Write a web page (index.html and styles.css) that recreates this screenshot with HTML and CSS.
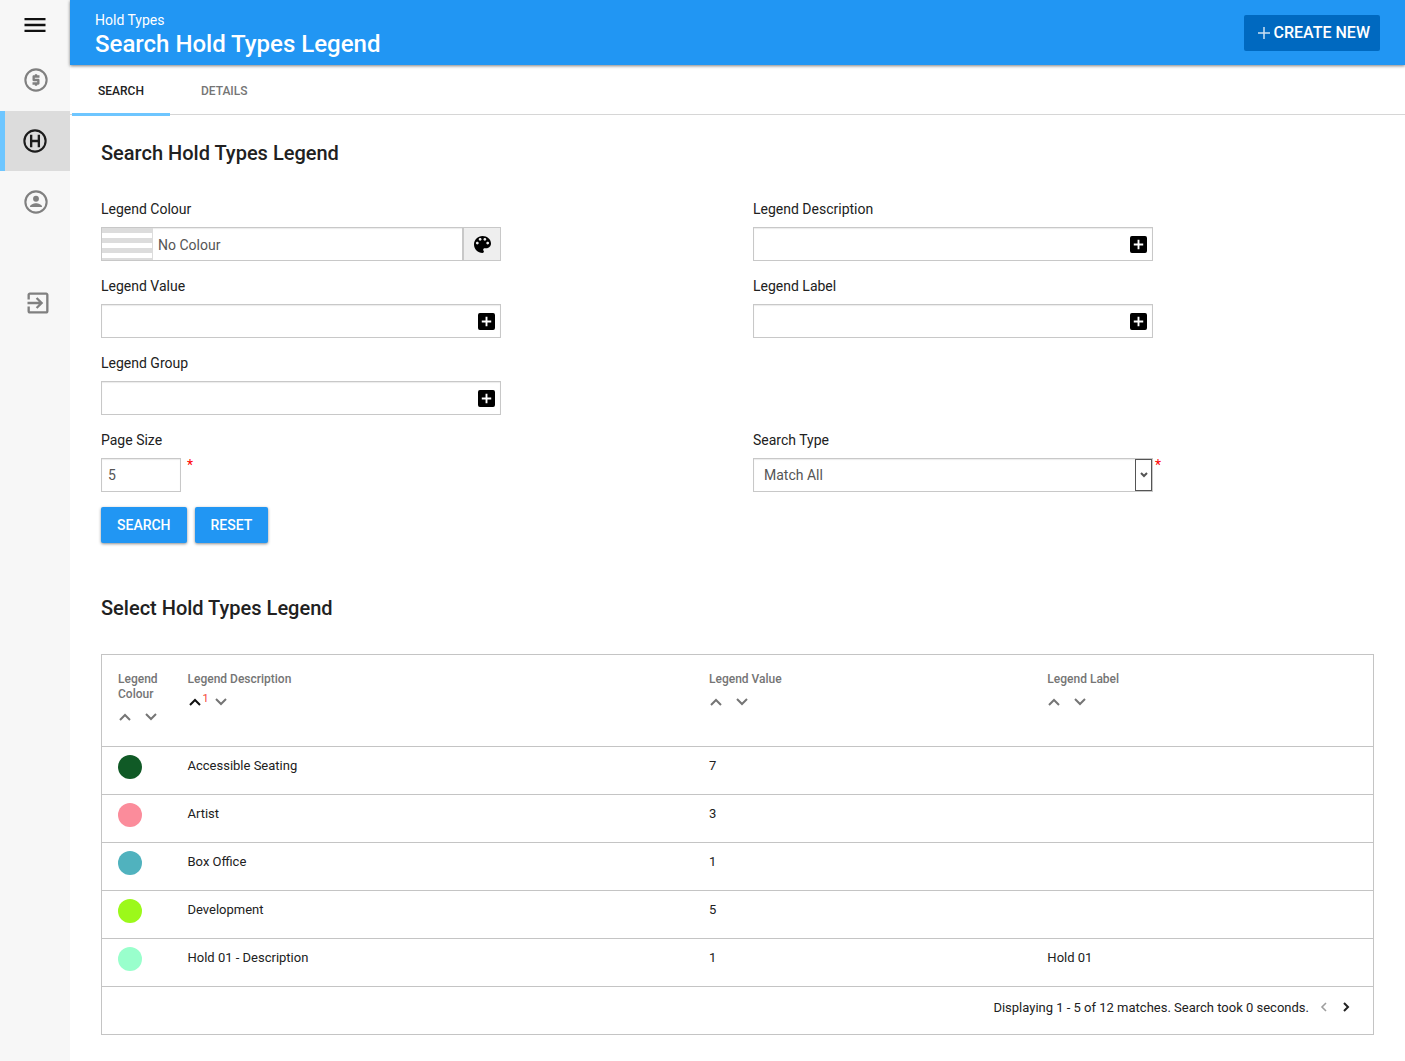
FILE: index.html
```html
<!DOCTYPE html>
<html lang="en">
<head>
<meta charset="utf-8">
<meta name="viewport" content="width=device-width, initial-scale=1">
<title>Search Hold Types Legend</title>
<link rel="stylesheet" href="styles.css">
</head>
<body>
<svg class="sprite" aria-hidden="true">
  <symbol id="chevron-up" viewBox="0 0 12 8"><path d="M1 7l5-5 5 5" fill="none" stroke="currentColor" stroke-width="2"/></symbol>
  <symbol id="chevron-down" viewBox="0 0 12 8"><path d="M1 1l5 5 5-5" fill="none" stroke="currentColor" stroke-width="2"/></symbol>
  <symbol id="chevron-small" viewBox="0 0 8 6"><path d="M1 1l3 3 3-3" fill="none" stroke="currentColor" stroke-width="2"/></symbol>
  <symbol id="add-box" viewBox="3 3 18 18"><path fill="currentColor" d="M19 3H5a2 2 0 0 0-2 2v14a2 2 0 0 0 2 2h14a2 2 0 0 0 2-2V5a2 2 0 0 0-2-2zm-2 10h-4v4h-2v-4H7v-2h4V7h2v4h4v2z"/></symbol>
</svg>

<nav class="sidebar" aria-label="Main">
  <button class="menu-button" type="button" aria-label="Menu">
    <svg class="nav-icon" viewBox="0 0 24 24"><path fill="currentColor" d="M3 18h18v-2H3v2zm0-5h18v-2H3v2zm0-7v2h18V6H3z"/></svg>
  </button>
  <a class="nav-item" href="#prices" aria-label="Prices">
    <svg class="nav-icon" viewBox="0 0 24 24"><circle cx="12" cy="12" r="9.1" fill="none" stroke="currentColor" stroke-width="1.8"/><path fill="currentColor" d="M11 17h2v-1h1c.55 0 1-.45 1-1v-3c0-.55-.45-1-1-1h-3v-1h4V8h-2V7h-2v1h-1c-.55 0-1 .45-1 1v3c0 .55.45 1 1 1h3v1H9v2h2v1z"/></svg>
  </a>
  <a class="nav-item nav-item-active" href="#holds" aria-label="Hold types">
    <svg class="nav-icon" viewBox="0 0 24 24"><circle cx="12" cy="12" r="9.1" fill="none" stroke="currentColor" stroke-width="1.8"/><path d="M8.700 6.700v10.600M15.300 6.700v10.600M8.700 12h6.600" fill="none" stroke="currentColor" stroke-width="2"/></svg>
  </a>
  <a class="nav-item" href="#account" aria-label="Account">
    <svg class="nav-icon" viewBox="0 0 24 24"><circle cx="12" cy="12" r="9.1" fill="none" stroke="currentColor" stroke-width="1.8"/><circle cx="12" cy="9.2" r="2.5" fill="currentColor"/><path fill="currentColor" d="M6.800 16.200c0-2 3.400-3.100 5.200-3.100s5.200 1.100 5.200 3.100z"/></svg>
  </a>
  <a class="nav-item nav-item-exit" href="#exit" aria-label="Log out">
    <svg class="nav-icon" viewBox="0 0 24 24"><path fill="currentColor" d="M10.090 15.590L11.500 17l5-5-5-5-1.410 1.410L12.670 11H3v2h9.670l-2.580 2.590zM19 3H5c-1.110 0-2 .9-2 2v4h2V5h14v14H5v-4H3v4c0 1.100.89 2 2 2h14c1.100 0 2-.9 2-2V5c0-1.100-.9-2-2-2z"/></svg>
  </a>
</nav>

<div class="page">
  <header class="topbar">
    <div class="topbar-text">
      <div class="topbar-section">Hold Types</div>
      <h1 class="topbar-title">Search Hold Types Legend</h1>
    </div>
    <button class="create-button" type="button">
      <svg class="create-icon" viewBox="0 0 12 12"><path d="M6 0v12M0 6h12" stroke="currentColor" stroke-width="1.500"/></svg>
      CREATE NEW
    </button>
  </header>

  <nav class="tabs" aria-label="Views">
    <a class="tab tab-active" href="#search" aria-current="page">SEARCH</a>
    <a class="tab" href="#details">DETAILS</a>
  </nav>

  <main class="content">
    <h2 class="section-title">Search Hold Types Legend</h2>
    <form class="search-form">
      <div class="fields">
        <div class="field">
          <label class="field-label" for="colour">Legend Colour</label>
          <div class="control">
            <span class="swatch-none"></span>
            <input class="control-input colour-input" id="colour" type="text" value="No Colour" readonly>
            <button class="palette-button" type="button" aria-label="Pick a colour">
              <svg class="palette-icon" viewBox="3 3 18 18"><path fill="currentColor" d="M12 3c-4.970 0-9 4.030-9 9s4.030 9 9 9c.83 0 1.500-.67 1.500-1.500 0-.39-.15-.74-.39-1.010-.23-.26-.38-.61-.38-.99 0-.83.67-1.500 1.500-1.500H16c2.760 0 5-2.240 5-5 0-4.420-4.030-8-9-8zm-5.500 9c-.83 0-1.500-.67-1.500-1.500S5.670 9 6.500 9 8 9.670 8 10.500 7.330 12 6.500 12zm3-4C8.670 8 8 7.330 8 6.500S8.670 5 9.500 5s1.500.67 1.500 1.500S10.330 8 9.500 8zm5 0c-.83 0-1.500-.67-1.500-1.500S13.670 5 14.500 5s1.500.67 1.500 1.500S15.330 8 14.500 8zm3 4c-.83 0-1.500-.67-1.500-1.500S16.670 9 17.500 9s1.500.67 1.500 1.500-.67 1.500-1.500 1.500z"/></svg>
            </button>
          </div>
        </div>
        <div class="field">
          <label class="field-label" for="description">Legend Description</label>
          <div class="control">
            <input class="control-input" id="description" type="text">
            <button class="add-button" type="button" aria-label="Add description"><svg class="add-icon"><use href="#add-box"/></svg></button>
          </div>
        </div>
        <div class="field">
          <label class="field-label" for="value">Legend Value</label>
          <div class="control">
            <input class="control-input" id="value" type="text">
            <button class="add-button" type="button" aria-label="Add value"><svg class="add-icon"><use href="#add-box"/></svg></button>
          </div>
        </div>
        <div class="field">
          <label class="field-label" for="label">Legend Label</label>
          <div class="control">
            <input class="control-input" id="label" type="text">
            <button class="add-button" type="button" aria-label="Add label"><svg class="add-icon"><use href="#add-box"/></svg></button>
          </div>
        </div>
        <div class="field field-first">
          <label class="field-label" for="group">Legend Group</label>
          <div class="control">
            <input class="control-input" id="group" type="text">
            <button class="add-button" type="button" aria-label="Add group"><svg class="add-icon"><use href="#add-box"/></svg></button>
          </div>
        </div>
        <div class="field field-first">
          <label class="field-label" for="page-size">Page Size</label>
          <div class="required-row">
            <div class="control control-small">
              <input class="control-input" id="page-size" type="text" value="5" required>
            </div>
            <span class="required">*</span>
          </div>
        </div>
        <div class="field">
          <label class="field-label" for="search-type">Search Type</label>
          <div class="required-row required-row-tight">
            <div class="control">
              <select class="control-select" id="search-type" required>
                <option>Match All</option>
                <option>Match Any</option>
              </select>
              <span class="select-arrow"><svg class="select-icon"><use href="#chevron-small"/></svg></span>
            </div>
            <span class="required">*</span>
          </div>
        </div>
      </div>
      <div class="actions">
        <button class="action-button" type="submit">SEARCH</button>
        <button class="action-button" type="reset">RESET</button>
      </div>
    </form>

    <h2 class="section-title">Select Hold Types Legend</h2>
    <table class="results">
      <colgroup><col class="col-colour"><col class="col-description"><col class="col-value"><col></colgroup>
      <thead>
        <tr>
          <th scope="col">Legend Colour
            <div class="sort">
              <button class="sort-button" type="button" aria-label="Sort by colour ascending"><svg class="sort-icon"><use href="#chevron-up"/></svg></button>
              <span class="sort-order"></span>
              <button class="sort-button" type="button" aria-label="Sort by colour descending"><svg class="sort-icon"><use href="#chevron-down"/></svg></button>
            </div>
          </th>
          <th scope="col" aria-sort="ascending">Legend Description
            <div class="sort">
              <button class="sort-button sort-button-active" type="button" aria-label="Sort by description ascending"><svg class="sort-icon"><use href="#chevron-up"/></svg></button>
              <span class="sort-order">1</span>
              <button class="sort-button" type="button" aria-label="Sort by description descending"><svg class="sort-icon"><use href="#chevron-down"/></svg></button>
            </div>
          </th>
          <th scope="col">Legend Value
            <div class="sort">
              <button class="sort-button" type="button" aria-label="Sort by value ascending"><svg class="sort-icon"><use href="#chevron-up"/></svg></button>
              <span class="sort-order"></span>
              <button class="sort-button" type="button" aria-label="Sort by value descending"><svg class="sort-icon"><use href="#chevron-down"/></svg></button>
            </div>
          </th>
          <th scope="col">Legend Label
            <div class="sort">
              <button class="sort-button" type="button" aria-label="Sort by label ascending"><svg class="sort-icon"><use href="#chevron-up"/></svg></button>
              <span class="sort-order"></span>
              <button class="sort-button" type="button" aria-label="Sort by label descending"><svg class="sort-icon"><use href="#chevron-down"/></svg></button>
            </div>
          </th>
        </tr>
      </thead>
      <tbody>
        <tr><td><span class="dot dot-green"></span></td><td>Accessible Seating</td><td>7</td><td></td></tr>
        <tr><td><span class="dot dot-pink"></span></td><td>Artist</td><td>3</td><td></td></tr>
        <tr><td><span class="dot dot-teal"></span></td><td>Box Office</td><td>1</td><td></td></tr>
        <tr><td><span class="dot dot-lime"></span></td><td>Development</td><td>5</td><td></td></tr>
        <tr><td><span class="dot dot-mint"></span></td><td>Hold 01 - Description</td><td>1</td><td>Hold 01</td></tr>
      </tbody>
      <tfoot>
        <tr>
          <td colspan="4">
            <div class="pager">
              <span class="pager-text">Displaying 1 - 5 of 12 matches. Search took 0 seconds.</span>
              <button class="pager-button" type="button" aria-label="Previous page" disabled><svg class="pager-icon" viewBox="0 0 8 10"><path d="M6 1L2 5l4 4" fill="none" stroke="currentColor" stroke-width="1.600"/></svg></button>
              <button class="pager-button" type="button" aria-label="Next page"><svg class="pager-icon" viewBox="0 0 8 10"><path d="M2 1l4 4-4 4" fill="none" stroke="currentColor" stroke-width="2"/></svg></button>
            </div>
          </td>
        </tr>
      </tfoot>
    </table>
  </main>
</div>
</body>
</html>
```
FILE: styles.css
```css
* {
  box-sizing: border-box;
}

body {
  display: flex;
  min-height: 100vh;
  margin: 0;
  background: #fff;
  color: #212121;
  font: 14px/20px Roboto, "Liberation Sans", sans-serif;
}

button,
input,
select {
  margin: 0;
  padding: 0;
  border: 0;
  background: none;
  color: inherit;
  font: inherit;
}

svg {
  display: block;
}

a {
  color: inherit;
  text-decoration: none;
}

.sprite {
  position: absolute;
  width: 0;
  height: 0;
}

/* Sidebar */
.sidebar {
  display: flex;
  flex: none;
  flex-direction: column;
  gap: 1px;
  width: 70px;
  background: #f7f7f7;
  color: #808080;
}

.menu-button {
  display: flex;
  align-items: center;
  justify-content: center;
  height: 49px;
  color: #111;
}

.nav-item {
  display: flex;
  align-items: center;
  height: 60px;
  padding-left: 22px;
}

.nav-item-active {
  padding-left: 16px;
  border-left: 5px solid #6ec6ff;
  background: #dcdcdc;
  color: #1c1c1c;
}

.nav-item-exit {
  margin-top: 40px;
  padding-left: 24px;
}

.nav-icon {
  width: 28px;
  height: 28px;
}

/* Header and tabs */
.page {
  flex: 1;
  min-width: 0;
}

.topbar {
  display: flex;
  align-items: center;
  justify-content: space-between;
  height: 65px;
  padding: 0 25px;
  background: #2196f3;
  box-shadow: 0 1px 3px rgba(0, 0, 0, 0.5);
  color: #fff;
}

.topbar-text {
  padding-top: 2px;
}

.topbar-title {
  margin: 0;
  font-size: 24px;
  font-weight: 500;
  line-height: 28px;
}

.create-button {
  display: flex;
  align-items: center;
  gap: 4px;
  height: 36px;
  padding: 1px 10px 0 14px;
  border-radius: 2px;
  background: #0069c0;
  font-size: 16px;
  font-weight: 500;
}

.create-icon {
  width: 12px;
  height: 12px;
  opacity: 0.8;
}

.tabs {
  display: flex;
  gap: 5px;
  height: 50px;
  padding-left: 2px;
  box-shadow: inset 0 -1px #d6d6d6;
  color: #757575;
  font-size: 12px;
  font-weight: 500;
}

.tab {
  padding: 16px 26px 0;
}

.tab-active {
  margin-bottom: -1px;
  border-bottom: 3px solid #6ec6ff;
  color: #212121;
}

/* Search form */
.content {
  padding: 26px 0 26px 31px;
}

.section-title {
  margin: 0 0 34px;
  font-size: 20px;
  font-weight: 500;
  line-height: 24px;
}

.fields {
  display: grid;
  grid-template-columns: 1fr 1fr;
  row-gap: 15px;
}

.field {
  max-width: 400px;
}

.field-first {
  grid-column: 1;
}

.field-label {
  display: block;
  margin-bottom: 8px;
}

.control {
  display: flex;
  flex: none;
  align-items: center;
  width: 100%;
  height: 34px;
  border: 1px solid #c8c8c8;
  box-shadow: inset 0 1px 1px rgba(0, 0, 0, 0.08);
  color: #555;
}

.control-small {
  width: 80px;
}

.control-input {
  flex: 1;
  min-width: 0;
  height: 100%;
  padding: 0 6px;
}

.colour-input {
  padding: 2px 5px 0;
}

.swatch-none {
  align-self: stretch;
  width: 51px;
  background: repeating-linear-gradient(#dcdcdc 0 5px, #fff 5px 10px);
  border-right: 1px solid #dcdcdc;
}

.palette-button {
  display: flex;
  align-items: center;
  justify-content: center;
  align-self: stretch;
  width: 38px;
  border-left: 2px solid #c8c8c8;
  background: #eee;
  color: #000;
}

.palette-icon {
  width: 17px;
  height: 17px;
}

.add-button {
  padding: 1px 5px 0;
  color: #000;
}

.add-icon {
  width: 17px;
  height: 17px;
}

.required-row {
  display: flex;
  gap: 6px;
}

.required-row-tight {
  gap: 2px;
}

.required {
  color: #f00;
  line-height: 14px;
}

.control-select {
  flex: 1;
  height: 100%;
  padding: 0 10px;
  appearance: none;
}

.select-arrow {
  display: flex;
  align-items: center;
  justify-content: center;
  align-self: stretch;
  width: 17px;
  border: 1px solid #555;
  pointer-events: none;
}

.select-icon {
  width: 8px;
  height: 6px;
}

.actions {
  display: flex;
  gap: 8px;
  margin: 15px 0 53px;
}

.action-button {
  height: 36px;
  padding: 0 16px;
  border-radius: 2px;
  background: #2196f3;
  box-shadow: 0 1px 3px rgba(0, 0, 0, 0.45);
  color: #fff;
  font-weight: 500;
}

/* Results */
.results {
  width: calc(100% - 31px);
  border: 1px solid #c4c4c4;
  border-collapse: collapse;
  table-layout: fixed;
  font-size: 13px;
  line-height: 22px;
}

.col-colour {
  width: 70px;
}

.col-description {
  width: 41%;
}

.col-value {
  width: 26.6%;
}

.results tr {
  height: 48px;
  border-bottom: 1px solid #c4c4c4;
}

.results thead tr {
  height: 92px;
}

.results th,
.results td {
  padding: 8px 0 0 16px;
  text-align: left;
  vertical-align: top;
}

.results th {
  padding: 17px 8px 0 16px;
  color: #757575;
  font-size: 12px;
  font-weight: 500;
  line-height: 15px;
}

.sort {
  display: flex;
  height: 16px;
  margin-top: 7px;
}

.sort-button {
  width: 14px;
  padding: 0 1px;
}

.sort-button-active {
  color: #111;
}

.sort-icon {
  width: 12px;
  height: 8px;
}

.sort-order {
  width: 12px;
  padding-left: 1px;
  color: #f44336;
  font-size: 11px;
  font-weight: 400;
  line-height: 10px;
}

.dot {
  display: block;
  width: 24px;
  height: 24px;
  border-radius: 50%;
}

.dot-green {
  background: #105a26;
}

.dot-pink {
  background: #fb8c9b;
}

.dot-teal {
  background: #50b2be;
}

.dot-lime {
  background: #9cf91a;
}

.dot-mint {
  background: #99ffcc;
}

.pager {
  display: flex;
  align-items: center;
  justify-content: flex-end;
  gap: 8px;
  padding-right: 20px;
}

.pager-text {
  padding-top: 2px;
}

.pager-button {
  display: flex;
  align-items: center;
  justify-content: center;
  width: 14px;
  height: 22px;
}

.pager-button:disabled {
  color: #9e9e9e;
}

.pager-icon {
  width: 8px;
  height: 10px;
}
```
